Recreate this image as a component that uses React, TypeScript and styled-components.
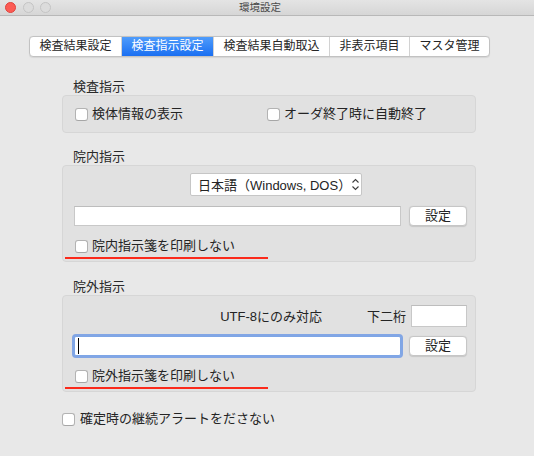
import React from "react";
import styled, { createGlobalStyle } from "styled-components";

const GlobalStyle = createGlobalStyle`
  html, body { margin: 0; padding: 0; }
  body {
    width: 534px;
    height: 456px;
    overflow: hidden;
    background: #e8e8e8;
    font-family: "Liberation Sans", "Noto Sans CJK JP", sans-serif;
    font-size: 13px;
    color: #242424;
  }
`;

const Window = styled.div`
  width: 534px;
  height: 456px;
  display: flex;
  flex-direction: column;
  background: #e8e8e8;
`;

const TitleBar = styled.div`
  height: 15px;
  display: grid;
  grid-template-columns: 1fr auto 1fr;
  align-items: center;
  padding-right: 14px;
  background: linear-gradient(#e4e4e4, #d6d6d6);
  border-bottom: 1px solid #b8b8b8;
`;

const Lights = styled.div`
  display: flex;
  gap: 6.5px;
  padding-left: 5px;
`;

const Light = styled.span<{ $red?: boolean }>`
  width: 11px;
  height: 11px;
  border-radius: 50%;
  box-sizing: border-box;
  background: ${(p) => (p.$red ? "#fc5b54" : "#dcdcdc")};
  border: 1px solid ${(p) => (p.$red ? "#e0433c" : "#c4c4c4")};
`;

const Title = styled.div`
  font-size: 10.5px;
  color: #4a4a4a;
  line-height: 15px;
`;

const TabRow = styled.div`
  display: flex;
  margin: 20px 0 0 29px;
`;

const Segmented = styled.div`
  display: flex;
  height: 21px;
  box-sizing: border-box;
  border: 1px solid #c2c2c2;
  border-radius: 4px;
  background: #ffffff;
  overflow: hidden;
  box-shadow: 0 0.5px 1px rgba(0, 0, 0, 0.08);
`;

const Tab = styled.div<{ $active?: boolean }>`
  padding: 0 9.5px;
  font-size: 12px;
  line-height: 19px;
  color: ${(p) => (p.$active ? "#ffffff" : "#262626")};
  background: ${(p) =>
    p.$active ? "linear-gradient(#4f9cfb, #1a6ff2)" : "transparent"};
  & + & {
    border-left: 1px solid #d2d2d2;
  }
`;

const Section = styled.div<{ $top: number }>`
  margin: ${(p) => p.$top}px 58px 0 62px;
  display: flex;
  flex-direction: column;
`;

const SectionTitle = styled.div`
  padding-left: 11px;
  line-height: 16px;
  color: #2a2a2a;
`;

const Box = styled.div`
  box-sizing: border-box;
  background: #e1e1e1;
  border: 1px solid #d6d6d6;
  border-radius: 4px;
`;

const CheckBox = styled(Box)`
  height: 38px;
  display: grid;
  grid-template-columns: 192px auto;
  align-items: center;
  padding: 0 12px;
`;

const PanelBox = styled(Box)`
  height: 97px;
  display: flex;
  flex-direction: column;
  padding: 7px 8px 0 11px;
`;

const TopRow = styled.div<{ $end?: boolean }>`
  height: 23px;
  display: flex;
  align-items: center;
  justify-content: ${(p) => (p.$end ? "flex-end" : "flex-start")};
  margin-top: ${(p) => (p.$end ? 1 : 0)}px;
  margin-bottom: ${(p) => (p.$end ? 9 : 10)}px;
`;

const Popup = styled.div`
  margin-left: 116px;
  width: 172px;
  height: 23px;
  box-sizing: border-box;
  border: 1px solid #c6c6c6;
  border-radius: 2px;
  background: #ffffff;
  display: flex;
  align-items: center;
  justify-content: space-between;
  padding: 0 5px 0 7px;
  white-space: nowrap;
  & > svg {
    flex: none;
  }
`;

const Caption = styled.span<{ $gap?: number }>`
  margin-right: ${(p) => p.$gap ?? 0}px;
  white-space: nowrap;
`;

const SmallField = styled.div`
  width: 56px;
  height: 22px;
  box-sizing: border-box;
  background: #ffffff;
  border: 1px solid #c8c8c8;
  border-top-color: #bdbdbd;
`;

const FieldRow = styled.div`
  display: flex;
  align-items: center;
  gap: 8px;
  height: 20px;
`;

const Field = styled.div<{ $focused?: boolean }>`
  flex: 1;
  height: 20px;
  box-sizing: border-box;
  background: #ffffff;
  border: 1px solid ${(p) => (p.$focused ? "#7ea6e6" : "#c8c8c8")};
  border-top-color: ${(p) => (p.$focused ? "#7ea6e6" : "#bdbdbd")};
  box-shadow: ${(p) =>
    p.$focused ? "0 0 0 2px rgba(98, 146, 230, 0.75)" : "none"};
  border-radius: ${(p) => (p.$focused ? "2px" : "0")};
  display: flex;
  align-items: center;
  padding-left: 3px;
`;

const Caret = styled.span`
  width: 1px;
  height: 16px;
  background: #000000;
`;

const Button = styled.div`
  width: 58px;
  height: 20px;
  box-sizing: border-box;
  background: #ffffff;
  border: 1px solid #c6c6c6;
  border-radius: 4px;
  box-shadow: 0 0.5px 1px rgba(0, 0, 0, 0.12);
  display: flex;
  align-items: center;
  justify-content: center;
  line-height: 18px;
`;

const CheckRow = styled.label<{ $gap?: number }>`
  display: flex;
  align-items: center;
  gap: ${(p) => p.$gap ?? 4}px;
  white-space: nowrap;
  line-height: 16px;
`;

const Tick = styled.span`
  width: 13px;
  height: 13px;
  box-sizing: border-box;
  background: #ffffff;
  border: 1px solid #b3b3b3;
  border-bottom-color: #a6a6a6;
  border-radius: 3px;
  flex: none;
`;

const PanelCheck = styled(CheckRow)`
  margin-top: 13px;
  padding-left: 1px;
  height: 14px;
`;

const RedLine = styled.div`
  margin: 4px 0 0 -9px;
  width: 203px;
  height: 2px;
  background: #fb2a1b;
`;

const Footer = styled.div`
  margin: 19px 0 0 62px;
`;

const Chevron = () => (
  <svg width="9" height="13" viewBox="0 0 9 13" fill="none">
    <path d="M1.5 4.5 L4.5 1.5 L7.5 4.5" stroke="#3c3c3c" strokeWidth="1.1" />
    <path d="M1.5 8.5 L4.5 11.5 L7.5 8.5" stroke="#3c3c3c" strokeWidth="1.1" />
  </svg>
);

const Check = ({ label, gap }: { label: string; gap?: number }) => (
  <CheckRow $gap={gap}>
    <Tick />
    <span>{label}</span>
  </CheckRow>
);

const tabs = ["検査結果設定", "検査指示設定", "検査結果自動取込", "非表示項目", "マスタ管理"];

export default function App() {
  return (
    <>
      <GlobalStyle />
      <Window>
        <TitleBar>
          <Lights>
            <Light $red />
            <Light />
            <Light />
          </Lights>
          <Title>環境設定</Title>
          <div />
        </TitleBar>

        <TabRow>
          <Segmented>
            {tabs.map((t, i) => (
              <Tab key={t} $active={i === 1}>
                {t}
              </Tab>
            ))}
          </Segmented>
        </TabRow>

        <Section $top={22}>
          <SectionTitle>検査指示</SectionTitle>
          <CheckBox>
            <Check label="検体情報の表示" />
            <Check label="オーダ終了時に自動終了" />
          </CheckBox>
        </Section>

        <Section $top={16}>
          <SectionTitle>院内指示</SectionTitle>
          <PanelBox>
            <TopRow>
              <Popup>
                <span>日本語（Windows, DOS）</span>
                <Chevron />
              </Popup>
            </TopRow>
            <FieldRow>
              <Field />
              <Button>設定</Button>
            </FieldRow>
            <PanelCheck>
              <Tick />
              <span>院内指示箋を印刷しない</span>
            </PanelCheck>
            <RedLine />
          </PanelBox>
        </Section>

        <Section $top={17}>
          <SectionTitle>院外指示</SectionTitle>
          <PanelBox>
            <TopRow $end>
              <Caption $gap={45}>UTF-8にのみ対応</Caption>
              <Caption $gap={5}>下二桁</Caption>
              <SmallField />
            </TopRow>
            <FieldRow>
              <Field $focused>
                <Caret />
              </Field>
              <Button>設定</Button>
            </FieldRow>
            <PanelCheck>
              <Tick />
              <span>院外指示箋を印刷しない</span>
            </PanelCheck>
            <RedLine />
          </PanelBox>
        </Section>

        <Footer>
          <Check label="確定時の継続アラートをださない" gap={5} />
        </Footer>
      </Window>
    </>
  );
}
